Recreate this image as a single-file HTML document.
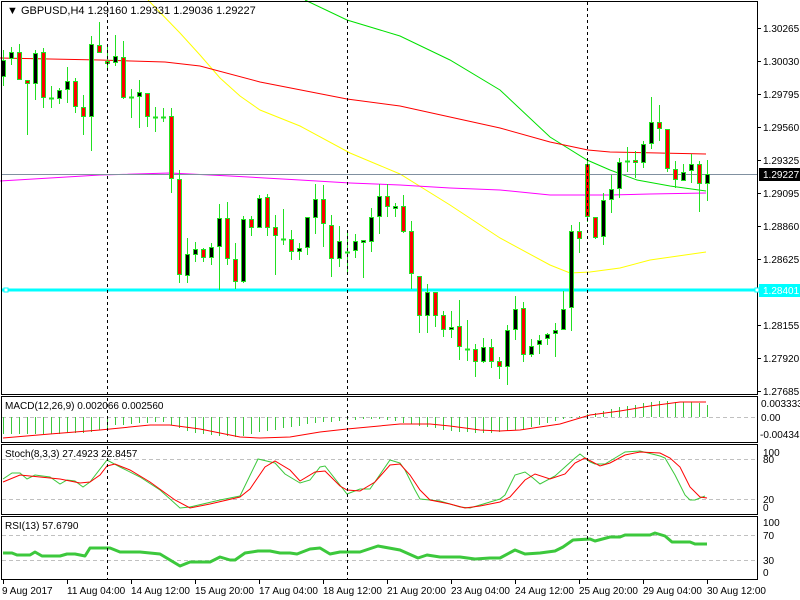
<!DOCTYPE html>
<html><head><meta charset="utf-8"><style>
html,body{margin:0;padding:0;background:#fff;width:800px;height:600px;overflow:hidden}
svg text{font-family:"Liberation Sans",sans-serif;font-size:10px;fill:#000}
</style></head><body>
<svg width="800" height="600" xmlns="http://www.w3.org/2000/svg" shape-rendering="crispEdges">
<rect width="800" height="600" fill="#fff"/>
<g fill="none" stroke-width="1" shape-rendering="auto">
<polyline stroke="#ffff00" points="148,0 180,33 200,55 220,78 240,96 260,110 300,126 350,153 400,174 450,205 500,238 550,265 570,273 590,272 620,268 650,260 706,252"/>
<polyline stroke="#00e000" points="305,0 347,20 400,36 450,60 500,90 550,137 587,160 610,170 637,180 670,186 706,191"/>
<polyline stroke="#ff0000" points="0,58 100,60 165,62 200,66 260,82 347,99 400,106 450,117 500,128 550,142 588,150 610,152 706,154"/>
<polyline stroke="#ff00ff" points="0,181 50,178 100,175 170,173 230,176 300,180 350,183 400,185 450,188 500,190 550,195 610,195 650,194 706,193"/>
</g>
<line x1="2" y1="174.5" x2="757" y2="174.5" stroke="#8090a0"/>
<line x1="2" y1="290" x2="757" y2="290" stroke="#00ffff" stroke-width="3"/>
<rect x="4" y="288" width="4" height="4" fill="#fff" stroke="#00ffff"/>
<g stroke="#22e022" stroke-width="1">
<line x1="3.5" y1="50" x2="3.5" y2="86"/><rect x="1.5" y="60.5" width="4" height="16" fill="#000"/>
<line x1="11.5" y1="47" x2="11.5" y2="65"/><rect x="9.5" y="52.5" width="4" height="6" fill="#000"/>
<line x1="19.5" y1="44" x2="19.5" y2="80"/><rect x="17.5" y="52.5" width="4" height="27" fill="#f00"/>
<line x1="27.5" y1="80" x2="27.5" y2="135"/><rect x="25.5" y="80.5" width="4" height="3" fill="#f00"/>
<line x1="35.5" y1="50" x2="35.5" y2="100"/><rect x="33.5" y="53.5" width="4" height="30" fill="#000"/>
<line x1="43.5" y1="48" x2="43.5" y2="108"/><rect x="41.5" y="52.5" width="4" height="45" fill="#f00"/>
<line x1="51.5" y1="86" x2="51.5" y2="108"/><line x1="49" y1="98.5" x2="54" y2="98.5" stroke-width="2"/>
<line x1="59.5" y1="88" x2="59.5" y2="104"/><rect x="57.5" y="90.5" width="4" height="8" fill="#000"/>
<line x1="67.5" y1="67" x2="67.5" y2="103"/><rect x="65.5" y="81.5" width="4" height="8" fill="#000"/>
<line x1="75.5" y1="78" x2="75.5" y2="113"/><rect x="73.5" y="81.5" width="4" height="25" fill="#f00"/>
<line x1="83.5" y1="95" x2="83.5" y2="135"/><rect x="81.5" y="107.5" width="4" height="9" fill="#f00"/>
<line x1="91.5" y1="36" x2="91.5" y2="151"/><rect x="89.5" y="44.5" width="4" height="72" fill="#000"/>
<line x1="99.5" y1="22" x2="99.5" y2="53"/><rect x="97.5" y="45.5" width="4" height="7" fill="#f00"/>
<line x1="107.5" y1="47" x2="107.5" y2="68"/><rect x="105.5" y="61.5" width="4" height="2" fill="#f00"/>
<line x1="115.5" y1="35" x2="115.5" y2="66"/><rect x="113.5" y="56.5" width="4" height="6" fill="#000"/>
<line x1="123.5" y1="41" x2="123.5" y2="99"/><rect x="121.5" y="57.5" width="4" height="40" fill="#f00"/>
<line x1="131.5" y1="89" x2="131.5" y2="118"/><line x1="129" y1="97.5" x2="134" y2="97.5" stroke-width="2"/>
<line x1="139.5" y1="80" x2="139.5" y2="128"/><rect x="137.5" y="92.5" width="4" height="4" fill="#000"/>
<line x1="147.5" y1="93" x2="147.5" y2="127"/><rect x="145.5" y="93.5" width="4" height="23" fill="#f00"/>
<line x1="155.5" y1="107" x2="155.5" y2="132"/><line x1="153" y1="117.5" x2="158" y2="117.5" stroke-width="2"/>
<line x1="163.5" y1="108" x2="163.5" y2="122"/><line x1="161" y1="117.5" x2="166" y2="117.5" stroke-width="2"/>
<line x1="171.5" y1="108" x2="171.5" y2="193"/><rect x="169.5" y="116.5" width="4" height="62" fill="#f00"/>
<line x1="179.5" y1="170" x2="179.5" y2="283"/><rect x="177.5" y="179.5" width="4" height="95" fill="#f00"/>
<line x1="187.5" y1="238" x2="187.5" y2="283"/><rect x="185.5" y="254.5" width="4" height="21" fill="#000"/>
<line x1="195.5" y1="242" x2="195.5" y2="262"/><rect x="193.5" y="249.5" width="4" height="5" fill="#000"/>
<line x1="203.5" y1="248" x2="203.5" y2="262"/><rect x="201.5" y="249.5" width="4" height="8" fill="#f00"/>
<line x1="211.5" y1="243" x2="211.5" y2="265"/><rect x="209.5" y="247.5" width="4" height="10" fill="#000"/>
<line x1="219.5" y1="204" x2="219.5" y2="290"/><rect x="217.5" y="218.5" width="4" height="28" fill="#000"/>
<line x1="227.5" y1="202" x2="227.5" y2="265"/><rect x="225.5" y="218.5" width="4" height="40" fill="#f00"/>
<line x1="235.5" y1="243" x2="235.5" y2="289"/><rect x="233.5" y="259.5" width="4" height="22" fill="#f00"/>
<line x1="243.5" y1="216" x2="243.5" y2="283"/><rect x="241.5" y="219.5" width="4" height="62" fill="#000"/>
<line x1="251.5" y1="216" x2="251.5" y2="236"/><rect x="249.5" y="219.5" width="4" height="8" fill="#f00"/>
<line x1="259.5" y1="195" x2="259.5" y2="228"/><rect x="257.5" y="198.5" width="4" height="29" fill="#000"/>
<line x1="267.5" y1="194" x2="267.5" y2="236"/><rect x="265.5" y="197.5" width="4" height="30" fill="#f00"/>
<line x1="275.5" y1="215" x2="275.5" y2="275"/><rect x="273.5" y="227.5" width="4" height="8" fill="#f00"/>
<line x1="283.5" y1="209" x2="283.5" y2="245"/><line x1="281" y1="239.5" x2="286" y2="239.5" stroke-width="2"/>
<line x1="291.5" y1="230" x2="291.5" y2="260"/><rect x="289.5" y="239.5" width="4" height="12" fill="#f00"/>
<line x1="299.5" y1="243" x2="299.5" y2="260"/><rect x="297.5" y="248.5" width="4" height="3" fill="#000"/>
<line x1="307.5" y1="217" x2="307.5" y2="255"/><rect x="305.5" y="217.5" width="4" height="30" fill="#000"/>
<line x1="315.5" y1="184" x2="315.5" y2="234"/><rect x="313.5" y="199.5" width="4" height="18" fill="#000"/>
<line x1="323.5" y1="185" x2="323.5" y2="247"/><rect x="321.5" y="199.5" width="4" height="24" fill="#f00"/>
<line x1="331.5" y1="215" x2="331.5" y2="277"/><rect x="329.5" y="225.5" width="4" height="33" fill="#f00"/>
<line x1="339.5" y1="226" x2="339.5" y2="267"/><rect x="337.5" y="241.5" width="4" height="17" fill="#000"/>
<line x1="347.5" y1="233" x2="347.5" y2="274"/><line x1="345" y1="252.5" x2="350" y2="252.5" stroke-width="2"/>
<line x1="355.5" y1="234" x2="355.5" y2="258"/><rect x="353.5" y="241.5" width="4" height="9" fill="#000"/>
<line x1="363.5" y1="240" x2="363.5" y2="278"/><rect x="361.5" y="240.5" width="4" height="2" fill="#000"/>
<line x1="371.5" y1="208" x2="371.5" y2="252"/><rect x="369.5" y="217.5" width="4" height="24" fill="#000"/>
<line x1="379.5" y1="184" x2="379.5" y2="234"/><rect x="377.5" y="196.5" width="4" height="20" fill="#000"/>
<line x1="387.5" y1="184" x2="387.5" y2="217"/><rect x="385.5" y="196.5" width="4" height="10" fill="#f00"/>
<line x1="395.5" y1="203" x2="395.5" y2="217"/><rect x="393.5" y="206.5" width="4" height="2" fill="#000"/>
<line x1="403.5" y1="195" x2="403.5" y2="233"/><rect x="401.5" y="206.5" width="4" height="25" fill="#f00"/>
<line x1="411.5" y1="221" x2="411.5" y2="289"/><rect x="409.5" y="231.5" width="4" height="42" fill="#f00"/>
<line x1="419.5" y1="276" x2="419.5" y2="333"/><rect x="417.5" y="276.5" width="4" height="39" fill="#f00"/>
<line x1="427.5" y1="284" x2="427.5" y2="333"/><rect x="425.5" y="292.5" width="4" height="23" fill="#000"/>
<line x1="435.5" y1="292" x2="435.5" y2="327"/><rect x="433.5" y="292.5" width="4" height="23" fill="#f00"/>
<line x1="443.5" y1="311" x2="443.5" y2="337"/><rect x="441.5" y="315.5" width="4" height="14" fill="#f00"/>
<line x1="451.5" y1="311" x2="451.5" y2="338"/><rect x="449.5" y="327.5" width="4" height="2" fill="#000"/>
<line x1="459.5" y1="300" x2="459.5" y2="360"/><rect x="457.5" y="326.5" width="4" height="20" fill="#f00"/>
<line x1="467.5" y1="320" x2="467.5" y2="361"/><line x1="465" y1="349.5" x2="470" y2="349.5" stroke-width="2"/>
<line x1="475.5" y1="344" x2="475.5" y2="377"/><rect x="473.5" y="349.5" width="4" height="12" fill="#f00"/>
<line x1="483.5" y1="338" x2="483.5" y2="363"/><rect x="481.5" y="347.5" width="4" height="14" fill="#000"/>
<line x1="491.5" y1="339" x2="491.5" y2="368"/><rect x="489.5" y="347.5" width="4" height="14" fill="#f00"/>
<line x1="499.5" y1="357" x2="499.5" y2="379"/><rect x="497.5" y="361.5" width="4" height="5" fill="#f00"/>
<line x1="507.5" y1="325" x2="507.5" y2="385"/><rect x="505.5" y="330.5" width="4" height="36" fill="#000"/>
<line x1="515.5" y1="296" x2="515.5" y2="340"/><rect x="513.5" y="309.5" width="4" height="20" fill="#000"/>
<line x1="523.5" y1="302" x2="523.5" y2="362"/><rect x="521.5" y="308.5" width="4" height="46" fill="#f00"/>
<line x1="531.5" y1="339" x2="531.5" y2="357"/><rect x="529.5" y="346.5" width="4" height="8" fill="#000"/>
<line x1="539.5" y1="335" x2="539.5" y2="354"/><rect x="537.5" y="340.5" width="4" height="4" fill="#000"/>
<line x1="547.5" y1="333" x2="547.5" y2="345"/><rect x="545.5" y="334.5" width="4" height="4" fill="#000"/>
<line x1="555.5" y1="323" x2="555.5" y2="357"/><rect x="553.5" y="330.5" width="4" height="3" fill="#000"/>
<line x1="563.5" y1="291" x2="563.5" y2="330"/><rect x="561.5" y="309.5" width="4" height="20" fill="#000"/>
<line x1="571.5" y1="225" x2="571.5" y2="331"/><rect x="569.5" y="231.5" width="4" height="76" fill="#000"/>
<line x1="579.5" y1="222" x2="579.5" y2="253"/><rect x="577.5" y="231.5" width="4" height="7" fill="#f00"/>
<line x1="587.5" y1="160" x2="587.5" y2="222"/><rect x="585.5" y="164.5" width="4" height="52" fill="#f00"/>
<line x1="595.5" y1="217" x2="595.5" y2="239"/><rect x="593.5" y="217.5" width="4" height="20" fill="#f00"/>
<line x1="603.5" y1="193" x2="603.5" y2="245"/><rect x="601.5" y="200.5" width="4" height="36" fill="#000"/>
<line x1="611.5" y1="175" x2="611.5" y2="213"/><rect x="609.5" y="189.5" width="4" height="10" fill="#000"/>
<line x1="619.5" y1="158" x2="619.5" y2="198"/><rect x="617.5" y="162.5" width="4" height="26" fill="#000"/>
<line x1="627.5" y1="147" x2="627.5" y2="172"/><line x1="625" y1="161.5" x2="630" y2="161.5" stroke-width="2"/>
<line x1="635.5" y1="151" x2="635.5" y2="178"/><rect x="633.5" y="160.5" width="4" height="2" fill="#f00"/>
<line x1="643.5" y1="141" x2="643.5" y2="168"/><rect x="641.5" y="144.5" width="4" height="18" fill="#000"/>
<line x1="651.5" y1="97" x2="651.5" y2="149"/><rect x="649.5" y="122.5" width="4" height="21" fill="#000"/>
<line x1="659.5" y1="105" x2="659.5" y2="141"/><rect x="657.5" y="122.5" width="4" height="6" fill="#f00"/>
<line x1="667.5" y1="129" x2="667.5" y2="172"/><rect x="665.5" y="129.5" width="4" height="39" fill="#f00"/>
<line x1="675.5" y1="161" x2="675.5" y2="188"/><rect x="673.5" y="169.5" width="4" height="10" fill="#f00"/>
<line x1="683.5" y1="164" x2="683.5" y2="181"/><rect x="681.5" y="172.5" width="4" height="8" fill="#000"/>
<line x1="691.5" y1="154" x2="691.5" y2="183"/><rect x="689.5" y="164.5" width="4" height="6" fill="#000"/>
<line x1="699.5" y1="161" x2="699.5" y2="212"/><rect x="697.5" y="164.5" width="4" height="19" fill="#f00"/>
<line x1="707.5" y1="160" x2="707.5" y2="201"/><rect x="705.5" y="174.5" width="4" height="9" fill="#000"/>
</g>
<g stroke="#c0c0c0" stroke-dasharray="4,3">
<line x1="2" y1="417.5" x2="757" y2="417.5"/>
<line x1="2" y1="459.5" x2="757" y2="459.5"/>
<line x1="2" y1="499.5" x2="757" y2="499.5"/>
<line x1="2" y1="535.5" x2="757" y2="535.5"/>
<line x1="2" y1="560.5" x2="757" y2="560.5"/>
</g>
<g stroke="#3cc83c">
<line x1="3.5" y1="417" x2="3.5" y2="434"/><line x1="11.5" y1="417" x2="11.5" y2="434"/><line x1="19.5" y1="417" x2="19.5" y2="434"/><line x1="27.5" y1="417" x2="27.5" y2="434"/><line x1="35.5" y1="417" x2="35.5" y2="434"/><line x1="43.5" y1="417" x2="43.5" y2="434"/><line x1="51.5" y1="417" x2="51.5" y2="434"/><line x1="59.5" y1="417" x2="59.5" y2="434"/><line x1="67.5" y1="417" x2="67.5" y2="433"/><line x1="75.5" y1="417" x2="75.5" y2="433"/><line x1="83.5" y1="417" x2="83.5" y2="433"/><line x1="91.5" y1="417" x2="91.5" y2="432"/><line x1="99.5" y1="417" x2="99.5" y2="430"/><line x1="107.5" y1="417" x2="107.5" y2="428"/><line x1="115.5" y1="417" x2="115.5" y2="425"/><line x1="123.5" y1="417" x2="123.5" y2="425"/><line x1="131.5" y1="417" x2="131.5" y2="424"/><line x1="139.5" y1="417" x2="139.5" y2="423"/><line x1="147.5" y1="417" x2="147.5" y2="423"/><line x1="155.5" y1="417" x2="155.5" y2="422"/><line x1="163.5" y1="417" x2="163.5" y2="422"/><line x1="171.5" y1="417" x2="171.5" y2="425"/><line x1="179.5" y1="417" x2="179.5" y2="428"/><line x1="187.5" y1="417" x2="187.5" y2="431"/><line x1="195.5" y1="417" x2="195.5" y2="433"/><line x1="203.5" y1="417" x2="203.5" y2="434"/><line x1="211.5" y1="417" x2="211.5" y2="435"/><line x1="219.5" y1="417" x2="219.5" y2="436"/><line x1="227.5" y1="417" x2="227.5" y2="436"/><line x1="235.5" y1="417" x2="235.5" y2="437"/><line x1="243.5" y1="417" x2="243.5" y2="436"/><line x1="251.5" y1="417" x2="251.5" y2="434"/><line x1="259.5" y1="417" x2="259.5" y2="432"/><line x1="267.5" y1="417" x2="267.5" y2="431"/><line x1="275.5" y1="417" x2="275.5" y2="430"/><line x1="283.5" y1="417" x2="283.5" y2="428"/><line x1="291.5" y1="417" x2="291.5" y2="427"/><line x1="299.5" y1="417" x2="299.5" y2="426"/><line x1="307.5" y1="417" x2="307.5" y2="424"/><line x1="315.5" y1="417" x2="315.5" y2="423"/><line x1="323.5" y1="417" x2="323.5" y2="422"/><line x1="331.5" y1="417" x2="331.5" y2="422"/><line x1="339.5" y1="417" x2="339.5" y2="421"/><line x1="347.5" y1="417" x2="347.5" y2="420"/><line x1="355.5" y1="417" x2="355.5" y2="420"/><line x1="363.5" y1="417" x2="363.5" y2="419"/><line x1="371.5" y1="417" x2="371.5" y2="419"/><line x1="379.5" y1="417" x2="379.5" y2="419"/><line x1="387.5" y1="417" x2="387.5" y2="420"/><line x1="395.5" y1="417" x2="395.5" y2="421"/><line x1="403.5" y1="417" x2="403.5" y2="423"/><line x1="411.5" y1="417" x2="411.5" y2="424"/><line x1="419.5" y1="417" x2="419.5" y2="426"/><line x1="427.5" y1="417" x2="427.5" y2="427"/><line x1="435.5" y1="417" x2="435.5" y2="428"/><line x1="443.5" y1="417" x2="443.5" y2="430"/><line x1="451.5" y1="417" x2="451.5" y2="431"/><line x1="459.5" y1="417" x2="459.5" y2="432"/><line x1="467.5" y1="417" x2="467.5" y2="432"/><line x1="475.5" y1="417" x2="475.5" y2="433"/><line x1="483.5" y1="417" x2="483.5" y2="433"/><line x1="491.5" y1="417" x2="491.5" y2="433"/><line x1="499.5" y1="417" x2="499.5" y2="432"/><line x1="507.5" y1="417" x2="507.5" y2="431"/><line x1="515.5" y1="417" x2="515.5" y2="430"/><line x1="523.5" y1="417" x2="523.5" y2="429"/><line x1="531.5" y1="417" x2="531.5" y2="427"/><line x1="539.5" y1="417" x2="539.5" y2="425"/><line x1="547.5" y1="417" x2="547.5" y2="423"/><line x1="555.5" y1="417" x2="555.5" y2="421"/><line x1="563.5" y1="417" x2="563.5" y2="419"/><line x1="571.5" y1="417" x2="571.5" y2="418"/><line x1="579.5" y1="417" x2="579.5" y2="416"/><line x1="587.5" y1="417" x2="587.5" y2="414"/><line x1="595.5" y1="417" x2="595.5" y2="413"/><line x1="603.5" y1="417" x2="603.5" y2="411"/><line x1="611.5" y1="417" x2="611.5" y2="409"/><line x1="619.5" y1="417" x2="619.5" y2="407"/><line x1="627.5" y1="417" x2="627.5" y2="406"/><line x1="635.5" y1="417" x2="635.5" y2="405"/><line x1="643.5" y1="417" x2="643.5" y2="403"/><line x1="651.5" y1="417" x2="651.5" y2="402"/><line x1="659.5" y1="417" x2="659.5" y2="401"/><line x1="667.5" y1="417" x2="667.5" y2="401"/><line x1="675.5" y1="417" x2="675.5" y2="402"/><line x1="683.5" y1="417" x2="683.5" y2="402"/><line x1="691.5" y1="417" x2="691.5" y2="402"/><line x1="699.5" y1="417" x2="699.5" y2="403"/><line x1="707.5" y1="417" x2="707.5" y2="405"/>
</g>
<g fill="none" shape-rendering="auto">
<polyline stroke="#ff0000" points="3,438 50,434 100,430 150,425 170,425 200,429 240,437 260,438 290,437 320,432 347,429 400,424 430,424 450,426 480,430 500,431 520,430 560,424 590,415 620,411 650,406 680,402 706,402"/>
<polyline stroke="#3cc83c" points="3,479 12,473 20,473 27,479 35,475 50,477 60,484 67,480 75,481 83,487 90,482 107,460 120,467 140,477 160,490 180,508 190,507 220,500 240,496 258,459 275,463 285,474 300,483 310,480 320,467 325,466 347,494 360,489 370,489 390,460 400,463 405,470 415,490 420,499 440,501 450,504 460,507 470,508 480,505 490,502 500,499 505,495 515,475 525,472 533,478 540,484 555,476 565,467 575,458 580,454 590,462 595,464 605,464 615,458 625,452 640,451 660,456 665,458 675,475 685,495 690,500 695,500 705,496"/>
<polyline stroke="#ff0000" points="3,482 20,475 40,477 60,479 80,483 90,482 100,475 107,466 115,464 130,470 150,482 175,500 190,508 210,504 240,497 250,489 265,467 275,461 290,470 300,481 315,472 325,471 340,486 347,490 360,491 375,482 390,465 400,464 410,475 420,490 430,500 450,504 465,508 480,506 500,502 510,497 525,480 535,474 550,479 565,474 575,463 585,458 600,466 610,463 625,455 640,452 660,453 670,458 680,467 690,487 700,497 707,498"/>
<polyline stroke="#3cc83c" stroke-width="3" stroke-linejoin="round" points="3,553 12,553 17,555 30,555 35,552 42,556 60,556 67,554 75,554 85,556 90,548 110,548 120,552 140,552 160,554 180,566 190,562 210,562 220,557 230,560 235,560 245,553 258,551 270,551 280,553 290,553 297,554 310,549 320,548 330,554 340,552 360,552 378,546 400,550 418,558 427,555 440,557 460,557 475,559 490,558 500,558 515,550 525,554 540,553 555,551 563,547 573,540 590,539 595,541 610,537 620,537 625,535 650,535 655,533 665,536 672,542 690,542 695,544 707,544"/>
</g>
<g stroke="#000" stroke-dasharray="3,3">
<line x1="107.5" y1="2" x2="107.5" y2="579"/>
<line x1="347.5" y1="2" x2="347.5" y2="579"/>
<line x1="587.5" y1="2" x2="587.5" y2="579"/>
</g>
<g fill="none" stroke="#000">
<rect x="1.5" y="1.5" width="756" height="393"/>
<rect x="1.5" y="396.5" width="756" height="46"/>
<rect x="1.5" y="444.5" width="756" height="70"/>
<rect x="1.5" y="516.5" width="756" height="63"/>
</g>
<g stroke="#000">
<line x1="757" y1="28.5" x2="761" y2="28.5"/><line x1="757" y1="61.5" x2="761" y2="61.5"/><line x1="757" y1="94.5" x2="761" y2="94.5"/><line x1="757" y1="127.5" x2="761" y2="127.5"/><line x1="757" y1="160.5" x2="761" y2="160.5"/><line x1="757" y1="193.5" x2="761" y2="193.5"/><line x1="757" y1="226.5" x2="761" y2="226.5"/><line x1="757" y1="259.5" x2="761" y2="259.5"/><line x1="757" y1="325.5" x2="761" y2="325.5"/><line x1="757" y1="358.5" x2="761" y2="358.5"/><line x1="757" y1="391.5" x2="761" y2="391.5"/>
<line x1="3.5" y1="579" x2="3.5" y2="584"/><line x1="67.5" y1="579" x2="67.5" y2="584"/><line x1="131.5" y1="579" x2="131.5" y2="584"/><line x1="195.5" y1="579" x2="195.5" y2="584"/><line x1="259.5" y1="579" x2="259.5" y2="584"/><line x1="323.5" y1="579" x2="323.5" y2="584"/><line x1="387.5" y1="579" x2="387.5" y2="584"/><line x1="451.5" y1="579" x2="451.5" y2="584"/><line x1="515.5" y1="579" x2="515.5" y2="584"/><line x1="579.5" y1="579" x2="579.5" y2="584"/><line x1="643.5" y1="579" x2="643.5" y2="584"/><line x1="707.5" y1="579" x2="707.5" y2="584"/>
</g>
<g>
<text x="763" y="32">1.30265</text><text x="763" y="65">1.30030</text><text x="763" y="98">1.29795</text><text x="763" y="131">1.29560</text><text x="763" y="164">1.29325</text><text x="763" y="197">1.29095</text><text x="763" y="230">1.28860</text><text x="763" y="263">1.28625</text><text x="763" y="329">1.28155</text><text x="763" y="362">1.27920</text><text x="763" y="395">1.27685</text>
</g>
<rect x="759" y="168" width="41" height="13" fill="#000"/>
<text x="763" y="178" style="fill:#fff">1.29227</text>
<rect x="759" y="284" width="41" height="13" fill="#00ffff"/>
<rect x="755" y="288" width="4" height="4" fill="#fff" stroke="#00ffff"/>
<text x="763" y="294" style="fill:#fff">1.28401</text>
<text x="761" y="407">0.003333</text>
<text x="761" y="421">0.00</text>
<text x="760" y="438">-0.004342</text>
<text x="763" y="456">100</text><text x="763" y="463">80</text><text x="763" y="503">20</text><text x="763" y="511">0</text>
<text x="763" y="526">100</text><text x="763" y="539">70</text><text x="763" y="564">30</text><text x="763" y="576">0</text>
<text x="7" y="14" style="font-size:11px">▼ GBPUSD,H4  1.29160 1.29331 1.29036 1.29227</text>
<text x="5" y="409">MACD(12,26,9) 0.002066 0.002560</text>
<text x="5" y="457">Stoch(8,3,3) 27.4923 22.8457</text>
<text x="5" y="529">RSI(13) 57.6790</text>
<g>
<text x="2" y="594">9 Aug 2017</text><text x="67" y="594">11 Aug 04:00</text><text x="131" y="594">14 Aug 12:00</text><text x="195" y="594">15 Aug 20:00</text><text x="259" y="594">17 Aug 04:00</text><text x="323" y="594">18 Aug 12:00</text><text x="387" y="594">21 Aug 20:00</text><text x="451" y="594">23 Aug 04:00</text><text x="515" y="594">24 Aug 12:00</text><text x="579" y="594">25 Aug 20:00</text><text x="643" y="594">29 Aug 04:00</text><text x="707" y="594">30 Aug 12:00</text>
</g>
</svg>
</body></html>
